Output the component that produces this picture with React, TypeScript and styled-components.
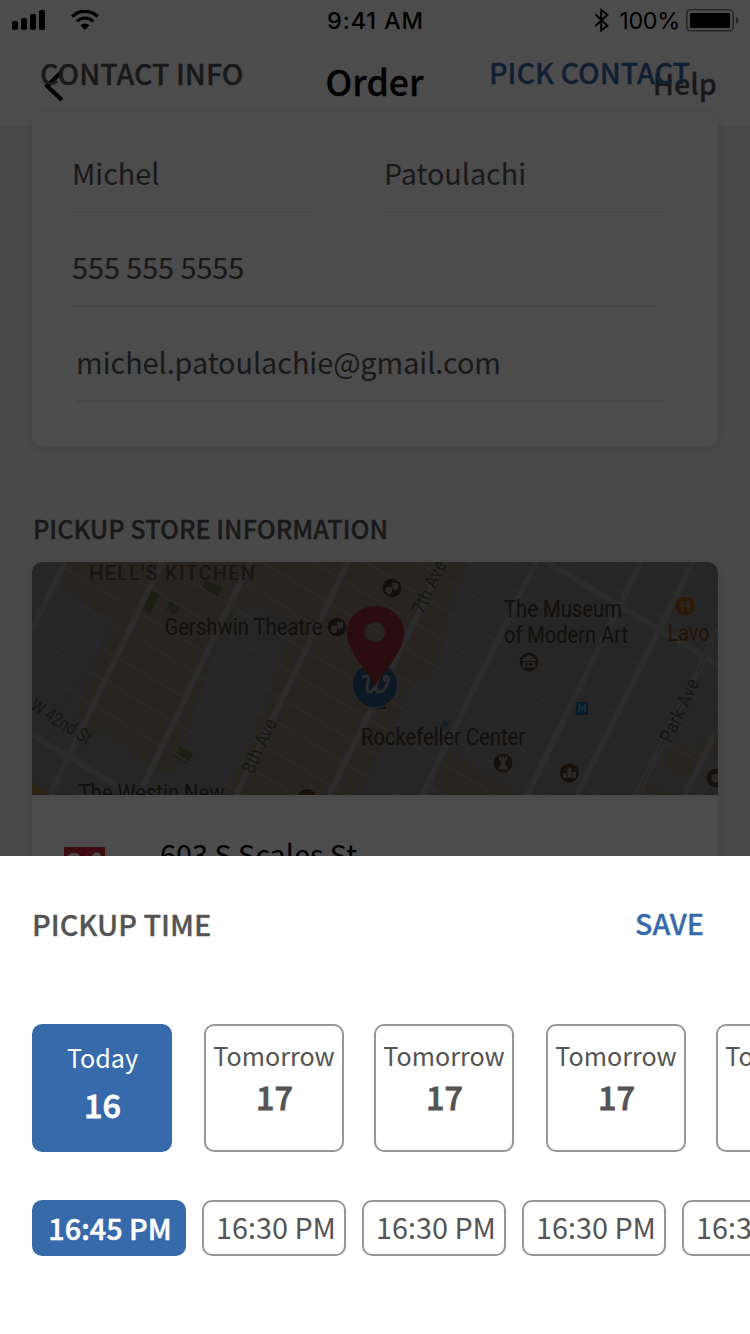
import React from 'react';
import styled, { createGlobalStyle, css } from 'styled-components';

const sans = '"Noto Sans CJK SC", "Noto Sans", sans-serif';

const GlobalStyle = createGlobalStyle`
  * { box-sizing: border-box; }
  body { margin: 0; background: #fff; font-family: ${sans}; }
`;

const semibold = css`
  font-weight: 500;
  -webkit-text-stroke: 0.3px currentColor;
`;

const Phone = styled.div`
  position: relative;
  width: 750px;
  height: 1334px;
  overflow: hidden;
  background: #f5f5f5;
`;

const Header = styled.header`
  height: 128px;
  background: #fff;
  border-bottom: 2px solid #ececec;
  display: flex;
  flex-direction: column;
`;

const StatusBar = styled.div`
  height: 40px;
  display: grid;
  grid-template-columns: 1fr auto 1fr;
  align-items: center;
  padding: 0 11px 0 12px;
  font-family: Inter, sans-serif;
  color: #000;
`;

const Signals = styled.div`
  display: flex;
  align-items: center;
  gap: 26px;
`;

const Clock = styled.div`
  padding-top: 2px;
  font-size: 23.5px;
  line-height: 38px;
  font-weight: 500;
  letter-spacing: 0.85px;
`;

const Power = styled.div`
  display: flex;
  justify-content: flex-end;
  align-items: center;
`;

const Charge = styled.span`
  margin: 0 6px 0 9px;
  padding-top: 2px;
  font-size: 23.4px;
  line-height: 38px;
  letter-spacing: -0.3px;
`;

const NavBar = styled.nav`
  height: 86px;
  display: grid;
  grid-template-columns: 1fr auto 1fr;
  align-items: center;
  padding: 0 33px 0 32px;
`;

const NavTitle = styled.h1`
  margin: 0 0 5px;
  font-size: 35.6px;
  line-height: 50px;
  ${semibold}
  color: #000;
`;

const NavLink = styled.div`
  justify-self: end;
  margin-bottom: 1px;
  font-size: 28.8px;
  line-height: 40px;
  ${semibold}
  color: #545454;
`;

const Scroller = styled.main`
  position: relative;
  margin-top: -74px;
  padding: 0 32px;
`;

const SectionHead = styled.div<{ $top: number; $height: number; $bottom: number }>`
  display: flex;
  justify-content: space-between;
  align-items: center;
  height: ${(p) => p.$height}px;
  margin: ${(p) => p.$top}px 0 ${(p) => p.$bottom}px;
`;

const SectionTitle = styled.h2<{ $size?: number; $indent?: number }>`
  margin: 0 0 0 ${(p) => p.$indent ?? 0}px;
  font-size: ${(p) => p.$size ?? 25.25}px;
  line-height: 40px;
  ${semibold}
  color: #545454;
  white-space: nowrap;
`;

const TextAction = styled.button<{ $right?: number }>`
  border: 0;
  padding: 0;
  margin: 0 ${(p) => p.$right ?? 0}px 2px 0;
  background: none;
  font-family: inherit;
  font-size: 28.7px;
  line-height: 38px;
  ${semibold}
  color: #366aab;
`;

const Card = styled.section`
  border-radius: 10px;
  background: #fff;
  box-shadow: 0 2px 12px rgba(0, 0, 0, 0.12);
  overflow: hidden;
`;

const ContactForm = styled(Card)`
  height: 334px;
  padding: 37px 56px 0 40px;
`;

const FieldRow = styled.div`
  display: flex;
  gap: 70px;
`;

const Field = styled.div<{ $width: number; $height: number; $indent?: number }>`
  width: ${(p) => p.$width}px;
  height: ${(p) => p.$height}px;
  margin-left: ${(p) => p.$indent ?? 0}px;
  display: flex;
  flex-direction: column;
  justify-content: flex-end;
  border-bottom: 2px solid #eeeeee;
  font-size: 28.8px;
  line-height: 40px;
  padding-bottom: 18px;
  letter-spacing: -0.04px;
  color: #545454;
`;

const StoreCard = styled(Card)`
  height: 500px;
`;

const MapView = styled.svg`
  display: block;
  width: 686px;
  height: 233px;
`;

const StoreRow = styled.div`
  display: flex;
  align-items: flex-start;
  gap: 55px;
  padding: 39px 32px 0;
`;

const Address = styled.div`
  font-size: 28.8px;
  line-height: 40px;
  color: #000;
`;

const LogoBadge = styled.svg`
  display: block;
  width: 41px;
  height: 41px;
  margin-top: 13px;
`;

const Scrim = styled.div`
  position: absolute;
  inset: 0;
  background: rgba(0, 0, 0, 0.7);
`;

const Sheet = styled.section`
  position: absolute;
  left: 0;
  right: 0;
  bottom: 0;
  height: 478px;
  padding: 47px 0 0 32px;
  background: #fff;
`;

const SheetHead = styled.div`
  display: flex;
  justify-content: space-between;
  align-items: flex-start;
  height: 40px;
  padding-right: 46px;

  button {
    margin-top: 1px;
  }
`;

const DayList = styled.div`
  display: flex;
  margin-top: 81px;
`;

const Day = styled.button<{ $active?: boolean }>`
  flex: none;
  width: 140px;
  height: 128px;
  margin: 0 0 0 30px;
  padding: ${(p) => (p.$active ? '13px 0 0 1px' : '11px 0 0')};
  border: 2px solid ${(p) => (p.$active ? '#366aab' : '#979797')};
  border-radius: 10px;
  background: ${(p) => (p.$active ? '#366aab' : '#fff')};
  color: ${(p) => (p.$active ? '#fff' : '#545454')};
  font-family: inherit;
  display: flex;
  flex-direction: column;
  align-items: center;

  &:nth-child(even) {
    margin-left: 32px;
  }
  &:first-child {
    margin-left: 0;
  }
`;

const DayName = styled.span`
  font-size: 25.1px;
  line-height: 36px;
`;

const DayNumber = styled.span<{ $active?: boolean }>`
  margin-top: ${(p) => (p.$active ? 7 : 1)}px;
  padding-left: ${(p) => (p.$active ? 0 : 1)}px;
  font-size: 32.4px;
  line-height: 44px;
  font-weight: 500;
  -webkit-text-stroke: 0.8px currentColor;
`;

const TimeList = styled.div`
  display: flex;
  gap: 16px;
  margin-top: 48px;
`;

const Time = styled.button<{ $active?: boolean }>`
  flex: none;
  width: ${(p) => (p.$active ? 154 : 144)}px;
  height: 56px;
  margin: 0;
  padding: 0 0 ${(p) => (p.$active ? 0 : 3)}px ${(p) => (p.$active ? 2 : 4)}px;
  border: 2px solid ${(p) => (p.$active ? '#366aab' : '#979797')};
  border-radius: 10px;
  background: ${(p) => (p.$active ? '#366aab' : '#fff')};
  color: ${(p) => (p.$active ? '#fff' : '#545454')};
  font-family: inherit;
  font-size: 28.8px;
  line-height: 40px;
  font-weight: 400;
  white-space: nowrap;
  ${(p) =>
    p.$active &&
    css`
      font-weight: 500;
      -webkit-text-stroke: 0.5px currentColor;
    `}
`;

const SignalIcon = () => (
  <svg width="33" height="20" viewBox="0 0 33 20">
    <rect x="0" y="11" width="6" height="9" rx="1.8" />
    <rect x="9" y="8" width="6" height="12" rx="1.8" />
    <rect x="18" y="4" width="6" height="16" rx="1.8" />
    <rect x="27" y="0" width="6" height="20" rx="1.8" />
  </svg>
);

const WifiIcon = () => (
  <svg width="28" height="20" viewBox="0 0 28 20" fill="none" stroke="#000" strokeWidth="3.2">
    <path d="M1.2 6.6a18.2 18.2 0 0 1 25.6 0" />
    <path d="M5.8 11.4a11.6 11.6 0 0 1 16.4 0" />
    <path d="M14 20l-4.6-4.7a6.600 6.600 0 0 1 9.200 0z" fill="#000" stroke="none" />
  </svg>
);

const BluetoothIcon = () => (
  <svg width="16" height="24" viewBox="0 0 16 24" fill="none" stroke="#000" strokeWidth="1.9">
    <path d="M1.400 6.400l12 11.200L7.200 22.400V2l6.200 4.800L1.400 18" />
  </svg>
);

const BatteryIcon = () => (
  <svg width="53" height="24" viewBox="0 0 53 24">
    <rect x="0.800" y="1.800" width="46.400" height="21" rx="4" fill="none" stroke="#7f7f7f" strokeWidth="1.600" />
    <rect x="4" y="5" width="40" height="15" rx="1" />
    <path d="M50 8.800c3.600 1.600 3.600 5.400 0 7z" fill="#7f7f7f" />
  </svg>
);

const BackGlyph = styled.svg`
  display: block;
  margin: 6px 0 0 10px;
`;

const BackIcon = () => (
  <BackGlyph width="24" height="32" viewBox="0 0 24 32" fill="none" stroke="#000" strokeWidth="4">
    <path d="M19.500 2L5 16l15 14" />
  </BackGlyph>
);

const avenues = [
  'M0 68L33 0',
  'M18 233L131 -2',
  'M107 233L219 -2',
  'M204 233L317 -2',
  'M297 233L413 -2',
  'M390 233L505 -2',
  'M495 233L610 -2',
  'M545 233L662 -2',
  'M605 233L686 68',
  'M653 233L686 165',
];

const streetOffsets = [-386, -355, -324, -293, -262, -231, -200, -169, -138, -107, -76, -45, -14, 13, 44, 75, 106, 203];

const PoiDot = ({ x, y, color = '#4d3b2f', children }: { x: number; y: number; color?: string; children?: React.ReactNode }) => (
  <g transform={`translate(${x} ${y})`}>
    <circle r="10.200" fill="none" stroke="#8c8c8c" strokeWidth="0.8" />
    <circle r="9.600" fill={color} />
    <g fill="#8a8a8a">{children}</g>
  </g>
);

const Masks = () => (
  <>
    <path d="M0 -5h6v5q-3 4-5 1z" />
    <path d="M-6 -1h6v5q-3 4-6 0z" />
  </>
);

const StoreMap = () => (
  <MapView viewBox="0 0 686 233">
    <rect width="686" height="233" fill="#7f7f81" />
    <g fill="#877a6a">
      <path d="M20 0H218L208 40L184 82L172 120L146 200L136 212L104 195L46 165L48 140L70 92L84 65L34 25z" />
      <path d="M190 0H435L418 40L404 108L376 124L364 160L348 190L326 233H190L212 195L236 140L250 90L262 62L226 44L208 48z" />
      <path d="M410 185L490 233H402z" />
      <path d="M638 178L670 197L660 216L630 202zM686 140V196L662 184L680 168zM614 220L642 233H610z" />
    </g>
    <path d="M66 166L100 184L92 200L58 186zM218 40L240 52L222 90L205 74z" fill="#7f8083" />
    <g fill="#5c6b40">
      <path d="M118 27L128 32L118 53L109 46zM138 39L148 45L142 53L134 47zM174 18L190 25L186 35L168 26zM148 184L161 192L156 202L142 194z" />
    </g>
    <g stroke="#8d8d8e" strokeWidth="1.500">
      {streetOffsets.map((y) => (
        <line key={y} x1="0" y1={y} x2="686" y2={y + 412} />
      ))}
    </g>
    <g stroke="#8f8f90" strokeWidth="6" fill="none">
      {avenues.map((d) => (
        <path key={d} d={d} />
      ))}
      <path d="M0 173L100 233M500 -9L686 103" />
    </g>
    <path d="M95 20Q82 68 55 110T10 180" fill="none" stroke="#747474" strokeWidth="0.8" />
    <path d="M605 233L686 68" stroke="#7f7f7f" strokeWidth="2" strokeDasharray="36 10" />
    <path d="M0 219L16 233H0z" fill="#9a7437" />
    <g fontFamily="Roboto, sans-serif" fill="#403429">
      <text x="57" y="17.500" fontSize="20" fontWeight="500" fill="#57493d" textLength="166" lengthAdjust="spacing">HELL'S KITCHEN</text>
      <text x="132.500" y="73" fontSize="23.500" textLength="158" lengthAdjust="spacingAndGlyphs">Gershwin Theatre</text>
      <text x="472" y="55" fontSize="23.500" textLength="118" lengthAdjust="spacingAndGlyphs">The Museum</text>
      <text x="472" y="81" fontSize="23.500" textLength="124" lengthAdjust="spacingAndGlyphs">of Modern Art</text>
      <text x="329" y="183" fontSize="23.500" textLength="164" lengthAdjust="spacingAndGlyphs">Rockefeller Center</text>
      <text x="46.500" y="239" fontSize="23.500" textLength="146" lengthAdjust="spacingAndGlyphs">The Westin New</text>
      <text x="635.500" y="79" fontSize="23.500" fill="#75400f" textLength="42" lengthAdjust="spacingAndGlyphs">Lavo</text>
    </g>
    <g fontFamily="Roboto, sans-serif" fontSize="19" fill="#4c4c4c">
      <text transform="translate(-3 147) rotate(32)" textLength="68" lengthAdjust="spacingAndGlyphs">W 42nd St</text>
      <text transform="translate(221 213) rotate(-65)" textLength="58" lengthAdjust="spacingAndGlyphs">8th Ave</text>
      <text transform="translate(391 53) rotate(-65)" textLength="56" lengthAdjust="spacingAndGlyphs">7th Ave</text>
      <text transform="translate(639 182) rotate(-65)" textLength="68" lengthAdjust="spacingAndGlyphs">Park Ave</text>
    </g>
    <PoiDot x={360} y={26}><Masks /></PoiDot>
    <PoiDot x={305} y={65}><Masks /></PoiDot>
    <PoiDot x={497} y={100}>
      <path d="M0 -7L7 -2.500V-1H-7V-2.500zM-6 0H6V4H7V5.500H-7V4H-6zM-3.500 1V3.500H-0.600V1zM0.600 1V3.500H3.500V1z" fillRule="evenodd" />
    </PoiDot>
    <PoiDot x={471} y={201}>
      <path d="M-4 -6.500h2v1.500h1v-1.500h2v1.500h1v-1.500h2v4h-2v4l2.500 3v2h-9v-2l2.500-3v-4h-2z" />
    </PoiDot>
    <PoiDot x={537.500} y={211}>
      <path d="M-6.500 5v-5h3.500v5zM-2 5v-9l2-2 2 2v9zM3 5v-6h3.500v6z" />
    </PoiDot>
    <PoiDot x={275} y={236.500} />
    <PoiDot x={684} y={216}><circle r="4.500" /></PoiDot>
    <PoiDot x={653} y={44} color="#a0560c">
      <path d="M-5.500 -5.500h1v4h1v-4h1v4h1v-4h1v5l-1.500 1.500v5h-1.500v-5L-5.500 -0.500zM4.500 -5.500v11.500h-1.500v-4.500h-2v-4q0-3 3.500-3z" />
    </PoiDot>
    <rect x="544" y="140" width="12" height="13" fill="#0a5f8a" />
    <path d="M547 150v-7l3 4.500 3-4.500v7" fill="none" stroke="#6fa0b5" strokeWidth="1.500" />
    <rect x="410" y="158" width="6" height="7" fill="#4a6488" transform="rotate(25 412 161)" />
    <rect x="345" y="141" width="9" height="6" fill="#215568" />
    <circle cx="343" cy="123" r="22.800" fill="#28567a" stroke="#858585" strokeWidth="1.400" />
    <path d="M331 115C334 113 337 114 336.500 117.500C335.500 123 333 130 337.500 130C342 130 345 121 347 115C344 123 342 130 347.500 130C353 130 357 119 356 115.500C355 113 351 115 353 118" fill="none" stroke="#969696" strokeWidth="3" strokeLinecap="round" />
    <path d="M343.500 124C338 111 315 92 315 70.500C315 56 327 44 343.500 44C360 44 372 56 372 70.500C372 92 349 111 343.500 124zM343 60a10 10 0 1 0 0.010 0z" fill="#902c32" fillRule="evenodd" />
  </MapView>
);

const StoreLogo = () => (
  <LogoBadge viewBox="0 0 41 41">
    <rect width="41" height="41" rx="1" fill="#d0263a" />
    <path d="M5 10C9 7 15 7 14 12L12 22C11 32 18 30 22 20L25 9C21 22 19 30 26 29C33 28 38 15 35 9C33 6 29 8 31 12" fill="none" stroke="#fff" strokeWidth="4" strokeLinecap="round" />
  </LogoBadge>
);

const days = [
  { id: 'd1', name: 'Today', number: 16, active: true },
  { id: 'd2', name: 'Tomorrow', number: 17 },
  { id: 'd3', name: 'Tomorrow', number: 17 },
  { id: 'd4', name: 'Tomorrow', number: 17 },
  { id: 'd5', name: 'Tomorrow', number: 17 },
];

const times = [
  { id: 't1', label: '16:45 PM', active: true },
  { id: 't2', label: '16:30 PM' },
  { id: 't3', label: '16:30 PM' },
  { id: 't4', label: '16:30 PM' },
  { id: 't5', label: '16:30 PM' },
];

export default function App() {
  return (
    <Phone>
      <GlobalStyle />
      <Header>
        <StatusBar>
          <Signals>
            <SignalIcon />
            <WifiIcon />
          </Signals>
          <Clock>9:41 AM</Clock>
          <Power>
            <BluetoothIcon />
            <Charge>100%</Charge>
            <BatteryIcon />
          </Power>
        </StatusBar>
        <NavBar>
          <BackIcon />
          <NavTitle>Order</NavTitle>
          <NavLink>Help</NavLink>
        </NavBar>
      </Header>

      <Scroller>
        <SectionHead $top={0} $height={38} $bottom={20}>
          <SectionTitle $size={28.7} $indent={8}>CONTACT INFO</SectionTitle>
          <TextAction $right={28}>PICK CONTACT</TextAction>
        </SectionHead>
        <ContactForm>
          <FieldRow>
            <Field $width={242} $height={64}>Michel</Field>
            <Field $width={278} $height={64}>Patoulachi</Field>
          </FieldRow>
          <Field $width={585} $height={94}>555 555 5555</Field>
          <Field $width={586} $height={95} $indent={4}>michel.patoulachie@gmail.com</Field>
        </ContactForm>

        <SectionHead $top={62} $height={40} $bottom={14}>
          <SectionTitle $indent={1}>PICKUP STORE INFORMATION</SectionTitle>
        </SectionHead>
        <StoreCard>
          <StoreMap />
          <StoreRow>
            <StoreLogo />
            <Address>603 S Scales St</Address>
          </StoreRow>
        </StoreCard>
      </Scroller>

      <Scrim />

      <Sheet>
        <SheetHead>
          <SectionTitle $size={28.9}>PICKUP TIME</SectionTitle>
          <TextAction>SAVE</TextAction>
        </SheetHead>
        <DayList>
          {days.map((day) => (
            <Day key={day.id} $active={day.active}>
              <DayName>{day.name}</DayName>
              <DayNumber $active={day.active}>{day.number}</DayNumber>
            </Day>
          ))}
        </DayList>
        <TimeList>
          {times.map((time) => (
            <Time key={time.id} $active={time.active}>
              {time.label}
            </Time>
          ))}
        </TimeList>
      </Sheet>
    </Phone>
  );
}
